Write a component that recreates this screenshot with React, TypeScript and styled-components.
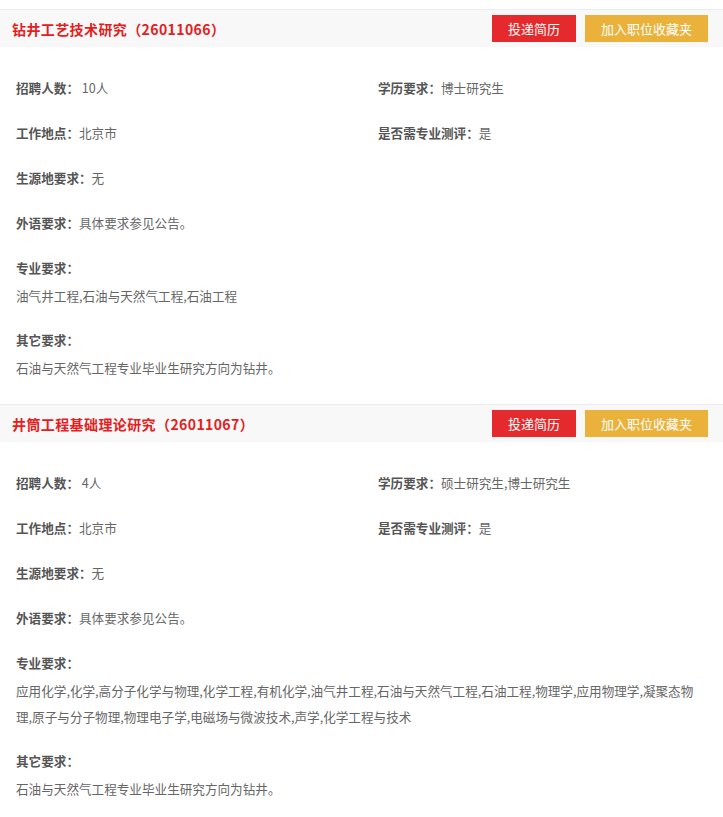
import styled, { createGlobalStyle } from "styled-components";

const GlobalStyle = createGlobalStyle`
  body {
    margin: 0;
    background: #fff;
    font-family: "Noto Sans CJK SC", "Noto Sans", sans-serif;
  }
`;

const Page = styled.div`
  padding-top: 9px;
`;

const Job = styled.section``;

const Header = styled.div`
  display: flex;
  align-items: center;
  justify-content: space-between;
  height: 37px;
  padding: 0 15px 0 12px;
  background: #f8f8f8;
  border-top: 1px solid #ebebeb;
`;

const Title = styled.h3`
  margin: 0;
  font-size: 14px;
  font-weight: 700;
  letter-spacing: 0.4px;
  color: #e4201e;
`;

const Actions = styled.div`
  display: flex;
  gap: 9px;
`;

const ActionBtn = styled.button<{ $tone: "red" | "yellow" }>`
  height: 27px;
  padding: 0 16px;
  border: none;
  color: #fff;
  font-family: inherit;
  font-size: 13px;
  cursor: pointer;
  background: ${(p) => (p.$tone === "red" ? "#e42a2c" : "#ebb23b")};
`;

const Body = styled.div`
  padding: 18px 16px 15px 16px;
`;

const FieldGrid = styled.div`
  display: grid;
  grid-template-columns: 362px 1fr;
`;

const Field = styled.div<{ $wide?: boolean }>`
  grid-column: ${(p) => (p.$wide ? "1 / -1" : "auto")};
  height: 45px;
  line-height: 45px;
  font-size: 12.6px;
  color: #666;
  white-space: nowrap;
`;

const Label = styled.span`
  font-weight: 700;
  color: #555;
`;

const Block = styled.div`
  padding: 10px 0 8px;
  font-size: 12.6px;
`;

const BlockLabel = styled.div`
  line-height: 26px;
  margin-bottom: 2px;
  font-weight: 700;
  color: #555;
`;

const BlockText = styled.div`
  max-width: 680px;
  line-height: 26px;
  color: #666;
`;

type JobData = {
  title: string;
  code: string;
  count: string;
  degree: string;
  place: string;
  assess: string;
  origin: string;
  language: string;
  majors: string;
  other: string;
};

const jobs: JobData[] = [
  {
    title: "钻井工艺技术研究",
    code: "26011066",
    count: "10人",
    degree: "博士研究生",
    place: "北京市",
    assess: "是",
    origin: "无",
    language: "具体要求参见公告。",
    majors: "油气井工程,石油与天然气工程,石油工程",
    other: "石油与天然气工程专业毕业生研究方向为钻井。",
  },
  {
    title: "井筒工程基础理论研究",
    code: "26011067",
    count: "4人",
    degree: "硕士研究生,博士研究生",
    place: "北京市",
    assess: "是",
    origin: "无",
    language: "具体要求参见公告。",
    majors:
      "应用化学,化学,高分子化学与物理,化学工程,有机化学,油气井工程,石油与天然气工程,石油工程,物理学,应用物理学,凝聚态物理,原子与分子物理,物理电子学,电磁场与微波技术,声学,化学工程与技术",
    other: "石油与天然气工程专业毕业生研究方向为钻井。",
  },
];

function JobCard({ job }: { job: JobData }) {
  return (
    <Job>
      <Header>
        <Title>
          {job.title}（{job.code}）
        </Title>
        <Actions>
          <ActionBtn $tone="red">投递简历</ActionBtn>
          <ActionBtn $tone="yellow">加入职位收藏夹</ActionBtn>
        </Actions>
      </Header>
      <Body>
        <FieldGrid>
          <Field>
            <Label>招聘人数：</Label> {job.count}
          </Field>
          <Field>
            <Label>学历要求：</Label>
            {job.degree}
          </Field>
          <Field>
            <Label>工作地点：</Label>
            {job.place}
          </Field>
          <Field>
            <Label>是否需专业测评：</Label>
            {job.assess}
          </Field>
          <Field $wide>
            <Label>生源地要求：</Label>
            {job.origin}
          </Field>
          <Field $wide>
            <Label>外语要求：</Label>
            {job.language}
          </Field>
        </FieldGrid>
        <Block>
          <BlockLabel>专业要求：</BlockLabel>
          <BlockText>{job.majors}</BlockText>
        </Block>
        <Block>
          <BlockLabel>其它要求：</BlockLabel>
          <BlockText>{job.other}</BlockText>
        </Block>
      </Body>
    </Job>
  );
}

export default function App() {
  return (
    <Page>
      <GlobalStyle />
      {jobs.map((job) => (
        <JobCard key={job.code} job={job} />
      ))}
    </Page>
  );
}
